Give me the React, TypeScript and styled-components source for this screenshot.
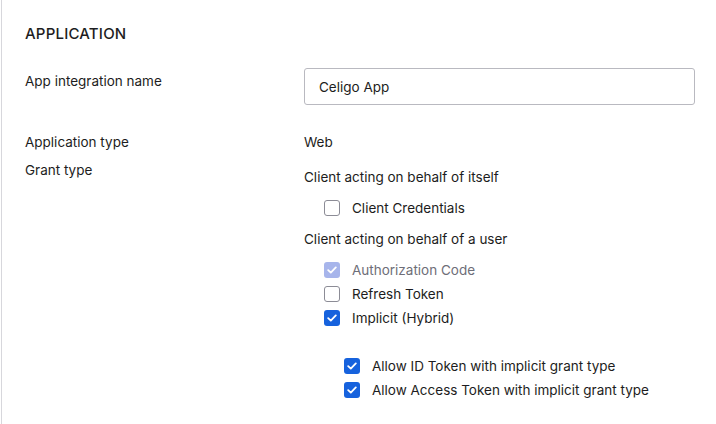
import React from 'react'
import styled, { createGlobalStyle } from 'styled-components'

const Global = createGlobalStyle`
  body { margin: 0; background: #fff; font-family: Inter, "Liberation Sans", sans-serif; color: #1d1d21; }
`

const Panel = styled.div`
  width: 716px;
  height: 424px;
  box-sizing: border-box;
  border-left: 1px solid #d7d7dc;
  margin-left: 1px;
  padding: 25px 0 0 23px;
  overflow: hidden;
`

const Title = styled.h2`
  margin: 0 0 25px;
  font-size: 15px;
  font-weight: 500;
  letter-spacing: 0.2px;
  line-height: 18px;
`

const Row = styled.div<{ $gap?: number }>`
  display: grid;
  grid-template-columns: 279px 391px;
  margin-bottom: ${p => p.$gap ?? 0}px;
  font-size: 13.5px;
  line-height: 18px;
`

const Label = styled.div<{ $top?: number }>`
  padding-top: ${p => p.$top ?? 0}px;
`

const Input = styled.div`
  height: 37px;
  box-sizing: border-box;
  border: 1px solid #b9b9c0;
  border-radius: 3px;
  padding: 0 14px;
  display: flex;
  align-items: center;
`

const Group = styled.div`
  display: flex;
  flex-direction: column;
`

const SubHead = styled.div<{ $mt?: number }>`
  margin-top: ${p => p.$mt ?? 0}px;
  height: 18px;
`

const Check = styled.label<{ $indent: number; $mt?: number; $muted?: boolean }>`
  display: flex;
  align-items: center;
  gap: 12px;
  margin-left: ${p => p.$indent}px;
  margin-top: ${p => p.$mt ?? 6}px;
  height: 18px;
  color: ${p => (p.$muted ? '#6e6e78' : '#1d1d21')};
`

const Box = styled.span<{ $state: 'on' | 'off' | 'dim' }>`
  width: 16px;
  height: 16px;
  box-sizing: border-box;
  border-radius: 3px;
  display: inline-flex;
  align-items: center;
  justify-content: center;
  background: ${p => (p.$state === 'on' ? '#1662dd' : p.$state === 'dim' ? '#a7b5eb' : '#fff')};
  border: ${p => (p.$state === 'off' ? '1.5px solid #8c8c96' : 'none')};
`

function Checkbox({ state, label, indent, mt, muted }: { state: 'on' | 'off' | 'dim'; label: string; indent: number; mt?: number; muted?: boolean }) {
  return (
    <Check $indent={indent} $mt={mt} $muted={muted}>
      <Box $state={state}>
        {state !== 'off' && (
          <svg width="10" height="8" viewBox="0 0 10 8">
            <path d="M1.2 4.2 L3.8 6.6 L8.8 1.4" fill="none" stroke="#fff" strokeWidth="1.8" strokeLinecap="round" strokeLinejoin="round" />
          </svg>
        )}
      </Box>
      {label}
    </Check>
  )
}

export default function App() {
  return (
    <>
      <Global />
      <Panel>
        <Title>APPLICATION</Title>
        <Row $gap={28}>
          <Label $top={4}>App integration name</Label>
          <Input>Celigo App</Input>
        </Row>
        <Row $gap={10}>
          <Label>Application type</Label>
          <div>Web</div>
        </Row>
        <Row>
          <Label>Grant type</Label>
          <Group>
            <SubHead $mt={7}>Client acting on behalf of itself</SubHead>
            <Checkbox state="off" label="Client Credentials" indent={20} mt={13} />
            <SubHead $mt={13}>Client acting on behalf of a user</SubHead>
            <Checkbox state="dim" label="Authorization Code" indent={20} mt={13} muted />
            <Checkbox state="off" label="Refresh Token" indent={20} />
            <Checkbox state="on" label="Implicit (Hybrid)" indent={20} />
            <Checkbox state="on" label="Allow ID Token with implicit grant type" indent={40} mt={30} />
            <Checkbox state="on" label="Allow Access Token with implicit grant type" indent={40} />
          </Group>
        </Row>
      </Panel>
    </>
  )
}
